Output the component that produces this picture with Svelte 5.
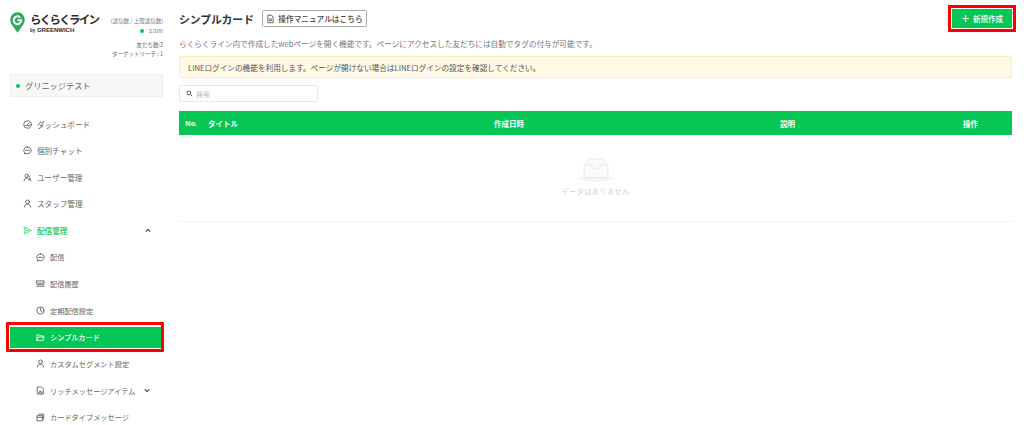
<script>
  const menu = [
    { label: 'ダッシュボード', icon: 'gauge' },
    { label: '個別チャット', icon: 'chat' },
    { label: 'ユーザー管理', icon: 'users' },
    { label: 'スタッフ管理', icon: 'user' },
    { label: '配信管理', icon: 'send', active: true, chevron: 'up' },
    { label: '配信', icon: 'chat', sub: true },
    { label: '配信履歴', icon: 'list', sub: true },
    { label: '定期配信設定', icon: 'clock', sub: true },
    { label: 'シンプルカード', icon: 'folder', sub: true, selected: true },
    { label: 'カスタムセグメント設定', icon: 'user', sub: true },
    { label: 'リッチメッセージアイテム', icon: 'doc', sub: true, chevron: 'down' },
    { label: 'カードタイプメッセージ', icon: 'cards', sub: true }
  ];
</script>

{#snippet icon(name)}
  <svg class="ico" viewBox="0 0 12 12" fill="none" stroke="currentColor" stroke-width="1.1" stroke-linecap="round" stroke-linejoin="round">
    {#if name === 'gauge'}
      <circle cx="6" cy="6" r="5" /><path d="M6 6.500 7.800 4.200M3.300 7.500h5.400" />
    {:else if name === 'chat'}
      <path d="M6 1.300c2.800 0 4.900 2 4.900 4.500S8.800 10.300 6 10.300c-.7 0-1.400-.1-2-.4l-2.200.8.4-1.900C1.500 8 1.100 6.900 1.100 5.800 1.100 3.300 3.200 1.300 6 1.300Z" /><path d="M3.500 5.800h5" />
    {:else if name === 'users'}
      <circle cx="5" cy="3.800" r="2.200" /><path d="M1.300 10.500C1.600 8.300 3 7 5 7c.8 0 1.500.2 2 .6M7.500 8l1.500 1.500M9 8 7.500 9.500M8.500 5 10.500 10.500" />
    {:else if name === 'user'}
      <circle cx="6" cy="3.800" r="2.500" /><path d="M1.800 10.800C2 8.300 3.700 6.800 6 6.800s4 1.500 4.200 4" />
    {:else if name === 'send'}
      <path d="M1.500 1.500 11 6l-9.500 4.500L3 6ZM3 6h4" />
    {:else if name === 'list'}
      <path d="M1.200 2.500h9.600v3H1.200ZM1.200 7.500h6M1.200 9.700h9.600M8.500 7.500h2.300" />
    {:else if name === 'clock'}
      <circle cx="6" cy="6" r="4.800" /><path d="M6 3v3.200l2 1.200" />
    {:else if name === 'folder'}
      <path d="M1.200 9.800V2.500h3.300l1 1.300h4.300v1.500M1.200 9.800h8.300l1.400-4.500H3L1.200 9.800Z" />
    {:else if name === 'doc'}
      <path d="M2.200 1.200h5.200l2.400 2.400v7.200H2.200Z" /><path d="M4 8.800 5.500 6.500l1 1.300.6-.6L8 8.800Z" />
    {:else if name === 'cards'}
      <path d="M3.500 1.500h6.800v7" /><path d="M1.800 3.500h6.800v7H1.800ZM1.800 5.800h6.800" />
    {/if}
  </svg>
{/snippet}

<div class="page">
  <aside class="sidebar">
    <div class="brand">
      <div class="logo">
        <svg class="pin" viewBox="0 0 24 32" preserveAspectRatio="none" aria-hidden="true">
          <path d="M12 .5C5.600.5.500 5.600.500 12c0 3 1.100 5.600 3 8L12 31.500 20.500 20c1.900-2.400 3-5 3-8C23.500 5.600 18.400.5 12 .5Z" fill="#2eaa5f" />
          <path d="M16.500 8.500A6 6 0 1 0 18 12.500h-6" fill="none" stroke="#fff" stroke-width="3" />
        </svg>
        <div class="wordmark">
          <div class="wm-main">らくらくライン</div>
          <div class="wm-sub"><span>by</span> GREENWICH</div>
        </div>
      </div>
      <div class="quota">
        <div>(送信数 / 上限送信数)</div>
        <div class="quota-num"><i class="dot"></i>2/200</div>
      </div>
    </div>
    <div class="stats">
      <div>友だち数:2</div>
      <div>ターゲットリーチ : 1</div>
    </div>
    <div class="account"><i class="dot"></i><span class="acc-name">グリニッジテスト</span></div>
    <nav class="menu">
      {#each menu as m}
        <div class="row" class:sub={m.sub} class:active={m.active} class:selected={m.selected}>
          {@render icon(m.icon)}
          <span>{m.label}</span>
          {#if m.chevron}
            <svg class="chev" class:far={m.chevron === 'up'} viewBox="0 0 8 6" fill="none" stroke="currentColor" stroke-width="1.500">
              <path d={m.chevron === 'up' ? 'M1 4.500 4 1.800l3 2.700' : 'M1 1.500l3 2.700 3-2.700'} />
            </svg>
          {/if}
        </div>
      {/each}
    </nav>
  </aside>

  <main class="main">
    <header class="top">
      <h1>シンプルカード</h1>
      <button class="manual">
        <svg class="doc" viewBox="0 0 12 12" fill="none" stroke="currentColor" stroke-width="1.100"><path d="M2.500 1h4.800l2.200 2.200V11h-7Z" /><path d="M4 6h4M4 8h4" /></svg>
        操作マニュアルはこちら
      </button>
      <button class="create"><span class="plus">＋</span>新規作成</button>
    </header>
    <p class="desc">らくらくライン内で作成したwebページを開く機能です。ページにアクセスした友だちには自動でタグの付与が可能です。</p>
    <div class="notice">LINEログインの機能を利用します。ページが開けない場合はLINEログインの設定を確認してください。</div>
    <div class="search">
      <svg viewBox="0 0 12 12" fill="none" stroke="#555" stroke-width="1.600"><circle cx="5" cy="5" r="3.300" /><path d="m7.500 7.500 3 3" /></svg>
      <span>検索</span>
    </div>
    <div class="thead">
      <div class="c-no">No.</div>
      <div class="c-title">タイトル</div>
      <div class="c-date">作成日時</div>
      <div class="c-desc">説明</div>
      <div class="c-op">操作</div>
    </div>
    <div class="empty">
      <svg viewBox="0 0 34 24" width="34" height="24">
        <ellipse cx="17" cy="20.500" rx="17" ry="3.300" fill="#f5f5f5" />
        <path d="M5 7 10 1h14l5 6v12.500H5Z" fill="#fafafa" stroke="#e6e6e6" stroke-width=".8" />
        <path d="M5 7h7.500c0 2.500 1.500 3.500 4.500 3.500s4.500-1 4.500-3.500H29" fill="none" stroke="#e6e6e6" stroke-width=".8" />
      </svg>
      <div class="empty-text">データはありません</div>
    </div>
  </main>
</div>

<style>
  :global(body) { margin: 0; background: #fff; }
  .page {
    width: 1024px;
    height: 425px;
    overflow: hidden;
    display: flex;
    font-family: "Noto Sans CJK JP", "Noto Sans", sans-serif;
    color: #555;
  }
  .sidebar { width: 172px; flex: none; padding: 0 9px 0 10px; box-sizing: border-box; }
  .brand { display: flex; justify-content: space-between; padding-top: 12px; height: 33px; box-sizing: border-box; }
  .logo { display: flex; gap: 5px; }
  .pin { width: 15px; height: 21px; flex: none; }
  .wordmark { color: #2b2b2b; }
  .wm-main { font-size: 11.500px; font-weight: 700; line-height: 14px; letter-spacing: -1.750px; white-space: nowrap; }
  .wm-sub { font-family: "Liberation Sans", sans-serif; font-size: 6px; font-weight: 700; line-height: 8px; white-space: nowrap; }
  .wm-sub span { font-size: 4.500px; }
  .quota { font-size: 5.500px; line-height: 10px; margin-top: 4px; text-align: right; white-space: nowrap; color: #777; }
  .quota-num { display: flex; justify-content: flex-end; align-items: center; gap: 5px; }
  .dot { display: inline-block; width: 4px; height: 4px; border-radius: 50%; background: #06c755; flex: none; }
  .stats { font-size: 5.500px; line-height: 9px; text-align: right; color: #666; margin-top: 8px; height: 30px; }
  .account {
    height: 23px;
    box-sizing: border-box;
    background: #f7f7f7;
    border: 1px solid #eee;
    display: flex;
    align-items: center;
    gap: 5px;
    padding-left: 5px;
    font-size: 8.200px;
    color: #666;
    margin-top: 3px;
  }
  .acc-name { margin-top: -2px; }
  .menu { margin-top: 13.700px; margin-left: -10px; margin-right: -9px; display: flex; flex-direction: column; }
  .row {
    height: 26.670px;
    display: flex;
    align-items: center;
    padding-left: 23px;
    gap: 5px;
    font-size: 7.600px;
    color: #666;
    position: relative;
    white-space: nowrap;
    flex: none;
  }
  .ico { width: 9px; height: 9px; flex: none; color: #555; }
  .row.sub { padding-left: 36px; font-size: 7.200px; }
  .row.active { color: #2fd070; font-weight: 700; }
  .row.active .ico { color: #2fd070; }
  .chev { width: 6px; height: 5px; color: #444; margin-left: 4px; }
  .chev.far { margin-left: 73px; }
  .row.selected {
    background: #06c755;
    color: #fff;
    font-weight: 500;
    height: 21px;
    margin: 3px 11px 2.670px 10px;
    padding-left: 26px;
  }
  .row.selected::after {
    content: "";
    position: absolute;
    inset: -5px -3px -4px -4px;
    border: 3px solid #f00;
    border-radius: 1px;
  }
  .row.selected .ico { color: #fff; }

  .main { flex: 1; min-width: 0; padding: 0 12px 0 7px; }
  .top { height: 37px; display: flex; align-items: center; gap: 8px; }
  h1 { margin: 0; font-size: 10.800px; font-weight: 700; color: #333; }
  button { font-family: inherit; cursor: pointer; }
  .manual {
    height: 17px;
    width: 105px;
    padding: 0;
    box-sizing: border-box;
    background: #fff;
    border: 1px solid #aaa;
    border-radius: 1.500px;
    font-size: 7.700px;
    font-weight: 500;
    color: #444;
    display: flex;
    align-items: center;
    justify-content: center;
    gap: 3px;
    white-space: nowrap;
  }
  .doc { width: 9px; height: 10px; }
  .create {
    margin-left: auto;
    width: 60px;
    height: 19px;
    padding: 0;
    border: 0;
    background: #06c755;
    color: #fff;
    font-size: 7.500px;
    font-weight: 500;
    display: flex;
    align-items: center;
    justify-content: center;
    gap: 3px;
    outline: 3px solid #f00;
    outline-offset: 1px;
  }
  .plus { font-size: 9px; font-weight: 700; }
  .desc { margin: 0; font-size: 7.650px; line-height: 12px; padding-top: 1px; color: #777; height: 18px; white-space: nowrap; }
  .notice {
    height: 22px;
    box-sizing: border-box;
    background: #fff9e6;
    border: 1px solid #fdedbd;
    border-radius: 1px;
    padding-left: 8px;
    display: flex;
    align-items: center;
    font-size: 7.650px;
    color: #555;
    white-space: nowrap;
  }
  .search {
    margin-top: 7px;
    width: 139px;
    height: 17px;
    box-sizing: border-box;
    border: 1px solid #e8e8e8;
    border-radius: 1px;
    display: flex;
    align-items: center;
    gap: 3px;
    padding-left: 6px;
    font-size: 7px;
    color: #bbb;
  }
  .search svg { width: 7px; height: 7px; }
  .thead {
    margin-top: 9px;
    height: 24px;
    background: #06c755;
    color: #fff;
    font-size: 7.500px;
    font-weight: 700;
    display: grid;
    grid-template-columns: 29px 255px 287px 194px 68px;
    align-items: center;
  }
  .c-no { padding-left: 6px; font-family: "Noto Sans", sans-serif; font-size: 7px; }
  .c-date { padding-left: 31px; }
  .c-desc { padding-left: 30px; }
  .c-op { padding-left: 19px; }
  .empty {
    height: 87px;
    border-bottom: 1px solid #f2f2f2;
    display: flex;
    flex-direction: column;
    align-items: center;
    padding-top: 23px;
    box-sizing: border-box;
  }
  .empty-text { margin-top: 3px; font-size: 7.400px; color: #d4d4d4; letter-spacing: .2px; }
</style>
